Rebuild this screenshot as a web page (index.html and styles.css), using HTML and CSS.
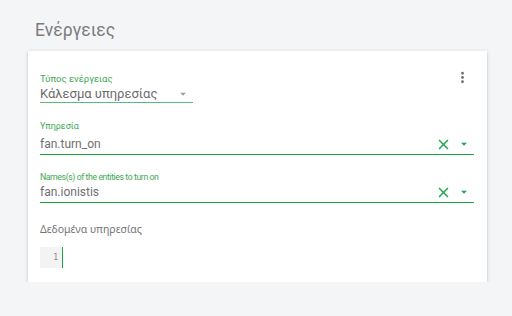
FILE: index.html
```html
<!DOCTYPE html>
<html>
<head>
<meta charset="utf-8">
<link rel="stylesheet" href="styles.css">
</head>
<body>
<div class="page">
  <h1 class="title">Ενέργειες</h1>
  <div class="card">
    <div class="head">
      <div class="dropdown">
        <div class="label label-type">Τύπος ενέργειας</div>
        <div class="drop-row">
          <span class="drop-value">Κάλεσμα υπηρεσίας</span>
          <svg class="arrow" viewBox="0 0 24 24"><path d="M7,10L12,15L17,10H7Z"/></svg>
        </div>
      </div>
      <div class="kebab">
        <svg viewBox="0 0 24 24"><path d="M12,16A2,2 0 0,1 14,18A2,2 0 0,1 12,20A2,2 0 0,1 10,18A2,2 0 0,1 12,16M12,10A2,2 0 0,1 14,12A2,2 0 0,1 12,14A2,2 0 0,1 10,12A2,2 0 0,1 12,10M12,4A2,2 0 0,1 14,6A2,2 0 0,1 12,8A2,2 0 0,1 10,6A2,2 0 0,1 12,4Z"/></svg>
      </div>
    </div>

    <div class="field field-service">
      <div class="label">Υπηρεσία</div>
      <div class="input-row">
        <span class="value">fan.turn_on</span>
        <svg class="close" viewBox="0 0 24 24"><path d="M19,6.41L17.59,5L12,10.59L6.41,5L5,6.41L10.59,12L5,17.59L6.41,19L12,13.41L17.59,19L19,17.59L13.41,12L19,6.41Z"/></svg>
        <svg class="arrow green" viewBox="0 0 24 24"><path d="M7,10L12,15L17,10H7Z"/></svg>
      </div>
    </div>

    <div class="field field-entity">
      <div class="label label-names">Names(s) of the entities to turn on</div>
      <div class="input-row">
        <span class="value">fan.ionistis</span>
        <svg class="close" viewBox="0 0 24 24"><path d="M19,6.41L17.59,5L12,10.59L6.41,5L5,6.41L10.59,12L5,17.59L6.41,19L12,13.41L17.59,19L19,17.59L13.41,12L19,6.41Z"/></svg>
        <svg class="arrow green" viewBox="0 0 24 24"><path d="M7,10L12,15L17,10H7Z"/></svg>
      </div>
    </div>

    <div class="data-label">Δεδομένα υπηρεσίας</div>
    <div class="editor">
      <div class="gutter">1</div>
      <div class="code"></div>
    </div>
  </div>
</div>
</body>
</html>
```

FILE: styles.css
```css
html, body {
  margin: 0;
  padding: 0;
  background: #f4f5f7;
  font-family: Roboto, "Noto Sans", sans-serif;
}

.page {
  padding: 0 25px 0 28px;
}

.title {
  margin: 0;
  padding: 18px 0 0 7px;
  font-size: 17.5px;
  line-height: 24px;
  font-weight: 400;
  color: #7c7c7c;
}

.card {
  margin-top: 9px;
  width: 459px;
  box-sizing: border-box;
  background: #fff;
  padding: 22px 13px 14px 12px;
  box-shadow: 0 2px 2px rgba(0,0,0,0.14), 0 1px 5px rgba(0,0,0,0.12), 0 3px 1px -2px rgba(0,0,0,0.2);
}

.head {
  display: flex;
  justify-content: space-between;
  align-items: flex-start;
}

.label {
  font-size: 9px;
  line-height: 11px;
  color: #3fa856;
  white-space: nowrap;
}

.label-type {
  font-size: 9.5px;
}

.label-names {
  font-size: 8.7px;
  letter-spacing: -0.4px;
}

.dropdown {
  width: 153px;
}

.drop-row {
  display: flex;
  align-items: center;
  margin-top: 2px;
  height: 16px;
  border-bottom: 1px solid #5dbb74;
  padding-right: 3px;
}

.drop-value {
  flex: 1;
  font-size: 13px;
  line-height: 16px;
  color: #6c6c6c;
}

.arrow {
  width: 14px;
  height: 14px;
  fill: #9e9e9e;
  flex: none;
}

.arrow.green {
  fill: #1aa64a;
}

.kebab {
  width: 24px;
  height: 24px;
  margin-top: -8px;
  display: flex;
  align-items: center;
  justify-content: center;
}

.kebab svg {
  width: 17px;
  height: 17px;
  fill: #707070;
}

.field-service {
  margin-top: 18px;
}

.field-service .input-row {
  margin-top: 4px;
}

.field-entity {
  margin-top: 17px;
}

.field-entity .input-row {
  margin-top: 1px;
}

.input-row {
  display: flex;
  align-items: center;
  height: 16px;
  padding-bottom: 2px;
  padding-right: 3px;
  border-bottom: 1px solid #16a83a;
}

.value {
  flex: 1;
  font-size: 12px;
  line-height: 16px;
  color: #707070;
}

.close {
  width: 17px;
  height: 17px;
  fill: #1aa64a;
  flex: none;
  margin-right: 5px;
}

.data-label {
  margin-top: 20px;
  font-family: "Noto Sans", sans-serif;
  font-size: 10.5px;
  line-height: 13px;
  color: #757575;
}

.editor {
  display: flex;
  margin-top: 11px;
  height: 21px;
}

.gutter {
  width: 22px;
  box-sizing: border-box;
  background: #f3f3f3;
  padding-right: 4px;
  text-align: right;
  font-family: "DejaVu Sans Mono", monospace;
  font-size: 8px;
  line-height: 21px;
  color: #888;
}

.code {
  width: 1px;
  background: #1aa64a;
}
```
